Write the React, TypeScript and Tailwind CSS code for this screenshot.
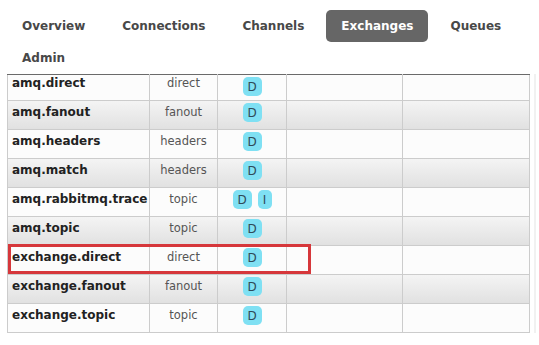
import React from 'react'

interface Exchange {
  name: string
  type: string
  features: string[]
}

const TABS = ['Overview', 'Connections', 'Channels', 'Exchanges', 'Queues', 'Admin']

const EXCHANGES: Exchange[] = [
  { name: 'amq.direct', type: 'direct', features: ['D'] },
  { name: 'amq.fanout', type: 'fanout', features: ['D'] },
  { name: 'amq.headers', type: 'headers', features: ['D'] },
  { name: 'amq.match', type: 'headers', features: ['D'] },
  { name: 'amq.rabbitmq.trace', type: 'topic', features: ['D', 'I'] },
  { name: 'amq.topic', type: 'topic', features: ['D'] },
  { name: 'exchange.direct', type: 'direct', features: ['D'] },
  { name: 'exchange.fanout', type: 'fanout', features: ['D'] },
  { name: 'exchange.topic', type: 'topic', features: ['D'] },
]

export default function App() {
  return (
    <div className="h-[345px] w-[539px] overflow-hidden bg-white font-['DejaVu_Sans',Verdana,sans-serif]">
      {/* 導覽分頁 */}
      <ul className="flex w-[530px] flex-wrap gap-x-[7px] pl-[7px] pt-[10px]">
        {TABS.map((tab) => {
          const active = tab === 'Exchanges'
          return (
            <li
              key={tab}
              className={`flex h-8 items-center rounded-[5px] px-[15px] text-[12px] font-bold ${
                active ? 'bg-[#666] text-white' : 'text-[#484848]'
              }`}
            >
              {tab}
            </li>
          )
        })}
      </ul>

      {/* 交換器列表 */}
      <div className="flex w-[536px] border-r-2 border-[#f1f1f1] pl-[7px]">
        <div className="relative">
          <table className="w-[522px] table-fixed border-collapse border-x border-b border-[#ccc]">
            <colgroup>
              <col className="w-[142px]" />
              <col className="w-[68px]" />
              <col className="w-[69px]" />
              <col className="w-[116px]" />
              <col className="w-[127px]" />
            </colgroup>
            <tbody>
              {EXCHANGES.map((ex, i) => {
                const first = i === 0
                const odd = i % 2 === 1
                return (
                  <tr
                    key={ex.name}
                    className={`${first ? 'h-[26px] border-t border-t-[#6a6a6a]' : 'h-[29px]'} border-b border-[#ccc] ${
                      odd ? 'bg-gradient-to-b from-[#f4f4f4] to-[#e1e1e1]' : 'bg-[#fcfcfc]'
                    }`}
                  >
                    <td
                      className={`border-r border-[#ccc] pl-[4px] align-top text-[12px] leading-[14px] font-bold text-[#222] ${
                        first ? 'pt-[1px]' : 'pt-[4px]'
                      }`}
                    >
                      {ex.name}
                    </td>
                    <td
                      className={`border-r border-[#ccc] text-center align-top text-[11.5px] leading-[14px] text-[#555] ${
                        first ? 'pt-[1px]' : 'pt-[4px]'
                      }`}
                    >
                      {ex.type}
                    </td>
                    <td className="border-r border-[#ccc] pt-[2px] align-top">
                      <div className="flex justify-center gap-[6px]">
                        {ex.features.map((f) => (
                          <span
                            key={f}
                            className={`flex h-[19px] items-center justify-center rounded-[5px] bg-[#7fe0f3] text-[12px] text-[#2f4a58] ${
                              f === 'I' ? 'w-[14px]' : 'w-[19px]'
                            }`}
                          >
                            {f}
                          </span>
                        ))}
                      </div>
                    </td>
                    <td className="border-r border-[#ccc]" />
                    <td />
                  </tr>
                )
              })}
            </tbody>
          </table>

          {/* 標示框 */}
          <div className="absolute left-[1px] top-[170px] h-[30px] w-[303px] border-[3px] border-[#d6373b]" />
        </div>
      </div>
    </div>
  )
}
